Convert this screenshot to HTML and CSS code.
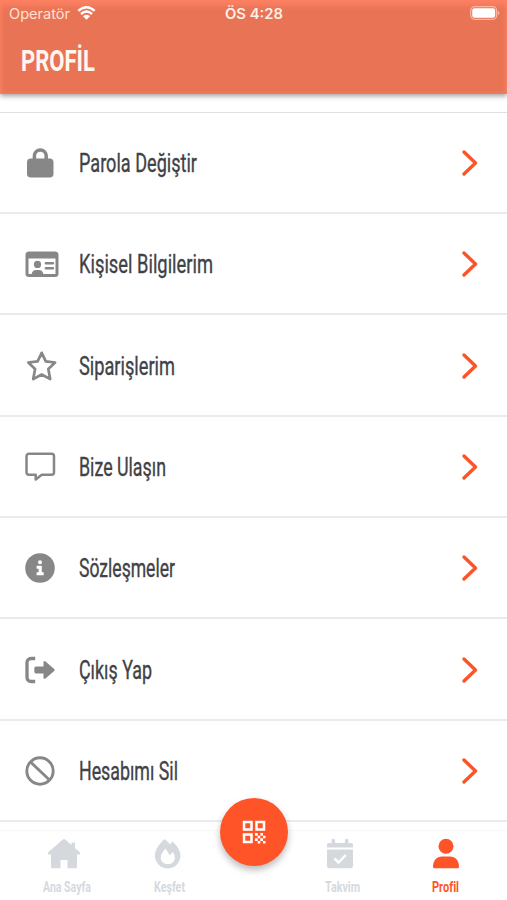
FILE: index.html
```html
<!DOCTYPE html>
<html lang="tr">
<head>
<meta charset="utf-8">
<meta name="viewport" content="width=device-width, initial-scale=1">
<title>Profil</title>
<link rel="stylesheet" href="styles.css">
</head>
<body>
<div class="screen">
  <header class="header">
    <div class="status">
      <div class="carrier">
        <svg class="label" width="62" height="20"><text x="0" y="15" textLength="61" lengthAdjust="spacingAndGlyphs">Operatör</text></svg>
        <svg class="wifi" width="19" height="14" viewBox="0 0 19 14"><path d="M1.3 4.8Q9.5-2.4 17.7 4.8M4 8Q9.5 3.2 15 8" fill="none" stroke="currentColor" stroke-width="2.4"/><path d="M6 10.2Q9.500 7.300 13 10.200L9.500 13.700z" fill="currentColor"/></svg>
      </div>
      <svg class="label clock" width="58" height="20"><text x="-1" y="15" textLength="58" lengthAdjust="spacingAndGlyphs">ÖS 4:28</text></svg>
      <svg class="battery" width="30" height="15" viewBox="0 0 30 15"><rect x=".7" y=".7" width="26" height="12.600" rx="4" fill="none" stroke="#ffb7a3" stroke-width="1.300"/><rect x="2.200" y="2.200" width="23" height="9.600" rx="2.300" fill="#fff"/><path d="M28 5q3 2 0 4z" fill="#ffb7a3"/></svg>
    </div>
    <svg class="title" width="76" height="40"><text x="0" y="31" textLength="74" lengthAdjust="spacingAndGlyphs">PROFİL</text></svg>
  </header>

  <main class="list">
    <a class="row">
      <svg class="icon" width="36" height="36" viewBox="0 0 36 36"><path d="M10.400 16V10.800a5.900 5.900 0 0 1 11.800 0V16" fill="none" stroke="currentColor" stroke-width="3.500"/><rect x="3" y="13.500" width="26.500" height="19" rx="3.800" fill="currentColor"/></svg>
      <svg class="text" width="118" height="36"><text x="0" y="27" textLength="118" lengthAdjust="spacingAndGlyphs">Parola Değiştir</text></svg>
      <svg class="chevron" width="18" height="28" viewBox="0 0 18 28"><path d="M3 3L14.500 14 3 25"/></svg>
    </a>
    <a class="row">
      <svg class="icon" width="36" height="36" viewBox="0 0 36 36"><path fill="currentColor" fill-rule="evenodd" d="M5 5.500h26a3.500 3.500 0 0 1 3.500 3.500v18.500a3.500 3.500 0 0 1-3.500 3.500H5a3.500 3.500 0 0 1-3.500-3.500V9A3.500 3.500 0 0 1 5 5.500zM4.500 12.500V28h3.200c.4-2.500 2-4 4.300-4h3c2.300 0 3.900 1.500 4.300 4h12.200V12.500z"/><circle cx="13.500" cy="18.400" r="3.600" fill="currentColor"/><path d="M21.800 17.300h7.200M21.800 22.300h7.200" stroke="currentColor" stroke-width="2.400" stroke-linecap="round"/></svg>
      <svg class="text" width="133" height="36"><text x="0" y="27" textLength="134" lengthAdjust="spacingAndGlyphs">Kişisel Bilgilerim</text></svg>
      <svg class="chevron" width="18" height="28" viewBox="0 0 18 28"><path d="M3 3L14.500 14 3 25"/></svg>
    </a>
    <a class="row">
      <svg class="icon" width="36" height="36" viewBox="0 0 36 36"><path d="M17.700 4.800L21.800 13.300 31.100 14.500 24.300 20.900 26.200 31.100 17.700 26.500 9.200 31.100 11.100 20.900 4.300 14.500 13.600 13.300z" fill="none" stroke="currentColor" stroke-width="2.700" stroke-linejoin="round"/></svg>
      <svg class="text" width="96" height="36"><text x="0" y="27" textLength="96" lengthAdjust="spacingAndGlyphs">Siparişlerim</text></svg>
      <svg class="chevron" width="18" height="28" viewBox="0 0 18 28"><path d="M3 3L14.500 14 3 25"/></svg>
    </a>
    <a class="row">
      <svg class="icon" width="36" height="36" viewBox="0 0 36 36"><path d="M5 4.700h22.500a2.500 2.500 0 0 1 2.500 2.500v16a2.500 2.500 0 0 1-2.500 2.500H17.800L11.700 30.500V25.700H5a2.500 2.500 0 0 1-2.500-2.500v-16A2.500 2.500 0 0 1 5 4.700z" fill="none" stroke="currentColor" stroke-width="2.500" stroke-linejoin="round"/></svg>
      <svg class="text" width="87" height="36"><text x="0" y="27" textLength="87" lengthAdjust="spacingAndGlyphs">Bize Ulaşın</text></svg>
      <svg class="chevron" width="18" height="28" viewBox="0 0 18 28"><path d="M3 3L14.500 14 3 25"/></svg>
    </a>
    <a class="row">
      <svg class="icon" width="36" height="36" viewBox="0 0 36 36"><circle cx="16" cy="18" r="14.800" fill="currentColor"/><circle cx="16" cy="12.300" r="2" fill="#fff"/><path d="M12.600 15.800h5.200v6.400h1.900v3h-7.100v-3h2v-3.400h-2z" fill="#fff"/></svg>
      <svg class="text" width="96" height="36"><text x="0" y="27" textLength="96" lengthAdjust="spacingAndGlyphs">Sözleşmeler</text></svg>
      <svg class="chevron" width="18" height="28" viewBox="0 0 18 28"><path d="M3 3L14.500 14 3 25"/></svg>
    </a>
    <a class="row">
      <svg class="icon" width="36" height="36" viewBox="0 0 36 36"><path d="M11.200 6.500H7a4 4 0 0 0-4 4v15a4 4 0 0 0 4 4h4.200" fill="none" stroke="currentColor" stroke-width="3.300"/><path d="M12 14.500h7.500V10.200q.3-1.800 2-.8l8.700 7.600q1 1 0 2l-8.700 7.600q-1.700 1-2-.8V21.500H12q-1.700 0-1.700-1.700v-3.600q0-1.700 1.700-1.700z" fill="currentColor"/></svg>
      <svg class="text" width="74" height="36"><text x="0" y="27" textLength="73" lengthAdjust="spacingAndGlyphs">Çıkış Yap</text></svg>
      <svg class="chevron" width="18" height="28" viewBox="0 0 18 28"><path d="M3 3L14.500 14 3 25"/></svg>
    </a>
    <a class="row">
      <svg class="icon" width="36" height="36" viewBox="0 0 36 36"><g fill="none" stroke="currentColor" stroke-width="2.900"><circle cx="16" cy="18" r="13.200"/><path d="M6.500 9L25.500 27"/></g></svg>
      <svg class="text" width="100" height="36"><text x="0" y="27" textLength="99" lengthAdjust="spacingAndGlyphs">Hesabımı Sil</text></svg>
      <svg class="chevron" width="18" height="28" viewBox="0 0 18 28"><path d="M3 3L14.500 14 3 25"/></svg>
    </a>
  </main>

  <nav class="tabs">
    <a class="tab home">
      <svg width="36" height="32" viewBox="0 0 36 32"><path d="M16.800 1.500q1.200-1 2.400 0L25.500 7V4.500h3.500V10L34 14.500q1 1.500-.5 2H31v12.800q0 1-1 1H21.500V22h-7v8.300H6q-1 0-1-1V16.500H2.500q-1.500-.5-.5-2z" fill="currentColor"/></svg>
      <svg class="caption" width="49" height="20"><text x="3" y="15.500" textLength="48" lengthAdjust="spacingAndGlyphs">Ana Sayfa</text></svg>
    </a>
    <a class="tab explore">
      <svg width="32" height="32" viewBox="0 0 32 32"><path fill="currentColor" fill-rule="evenodd" d="M12.500 1c2 1.500 4 3.500 5.500 5.600L20.500 3.500C25 7.500 28.500 13 28.500 17.600a12.800 12.800 0 0 1-25.600 0C2.900 12 7.500 5.500 12.500 1zM13.600 10.500C11 13.500 8.800 16.500 8.800 19.500c0 4 3 6.600 7 6.600s7-2.600 7-6.400c0-2.300-.9-4.300-2-5.700l-3 3.400z"/></svg>
      <svg class="caption" width="32" height="20"><text x="2" y="15.500" textLength="31" lengthAdjust="spacingAndGlyphs">Keşfet</text></svg>
    </a>
    <a class="tab calendar">
      <svg width="32" height="32" viewBox="0 0 32 32"><path fill="currentColor" d="M3 9.500V6.500q0-1.500 1.500-1.500H7.500V2.500q0-1.800 1.800-1.800T11.100 2.500V5h9.800V2.500q0-1.800 1.800-1.800T24.500 2.500V5h3Q29 5 29 6.500v3zM3 11.500h26V28q0 2.300-2.300 2.300H5.300Q3 30.300 3 28z"/><path d="M10.500 20.500l4 4 7.300-7.500" fill="none" stroke="#fff" stroke-width="2.500"/></svg>
      <svg class="caption" width="35" height="20"><text x="2" y="15.500" textLength="35" lengthAdjust="spacingAndGlyphs">Takvim</text></svg>
    </a>
    <a class="tab profile">
      <svg width="32" height="32" viewBox="0 0 32 32"><circle cx="16" cy="8.300" r="7.500" fill="currentColor"/><path d="M3 28.800C3 22.500 6.800 18.500 12 18.500h8c5.200 0 9 4 9 10.300q0 1.500-1.500 1.500h-23Q3 30.300 3 28.800z" fill="currentColor"/></svg>
      <svg class="caption" width="27" height="20"><text x="0" y="15.500" textLength="27" lengthAdjust="spacingAndGlyphs">Profil</text></svg>
    </a>
    <a class="scan">
      <svg width="24" height="24" viewBox="0 0 24 24"><g fill="none" stroke="#fff" stroke-width="2.500"><path d="M2 2h7.500v7.500H2zM14.500 2H22v7.500h-7.500zM2 14.500h7.500V22H2z"/></g><path fill="#fff" d="M13 13h2.700v2.700H13zM18.300 13H21v2.700h-2.700zM15.700 15.700h2.600v2.600h-2.600zM21 15.700h2.500v2.600H21zM13 18.300h2.700V21H13zM18.300 18.300H21V21h-2.700zM15.700 21h2.600v2.500h-2.600zM21 21h2.500v2.500H21z"/></svg>
    </a>
  </nav>
</div>
</body>
</html>
```
FILE: styles.css
```css
* { box-sizing: border-box; }
body { margin: 0; background: #fff; font-family: Roboto, "Liberation Sans", sans-serif; }
svg { display: block; flex: none; overflow: visible; }
text { fill: currentColor; }

.screen { display: flex; flex-direction: column; width: 507px; height: 900px; overflow: hidden; }

.header {
  flex: none;
  height: 94px;
  background: #e97455;
  color: #fff7ef;
  box-shadow: inset 0 7px 7px -2px #ff8265, inset 2px 0 4px -1px #fb8063, inset -2px 0 4px -1px #fb8063, 0 2px 5px rgba(0, 0, 0, .38);
}
.status { display: grid; grid-template-columns: 1fr auto 1fr; height: 28px; padding: 4px 7px 0 9px; }
.carrier { display: flex; gap: 6px; color: #ffe2d5; }
.label { font-family: Inter, sans-serif; font-size: 14px; }
.wifi { margin-top: 2px; color: #fff; }
.clock { font-weight: 600; color: #fff0e6; }
.battery { justify-self: end; margin-top: 2px; }
.title { margin: 12px 0 0 21px; font-size: 30px; font-weight: 700; }

.list { flex: none; margin-top: 17.5px; border-top: 1.4px solid #dfdfdf; }
.row {
  display: flex;
  align-items: center;
  height: 101.4px;
  padding: 1.400px 28px 0 24px;
  border-bottom: 2px solid #ebebeb;
  color: #3f4247;
}
.icon { color: #878787; }
.text { margin-left: 19px; font-size: 25px; font-weight: 400; stroke: currentColor; stroke-width: .35px; }
.chevron { margin-left: auto; fill: none; stroke: #fa5429; stroke-width: 3.4; stroke-linecap: round; stroke-linejoin: round; }

.tabs {
  position: relative;
  flex: 1;
  display: grid;
  grid-template-columns: 118px 101px 71px 100px 111px;
  margin-top: 7.5px;
  border-top: 1px solid #f7f7f7;
  background: #fff;
}
.tab { display: flex; flex-direction: column; align-items: center; padding-top: 7px; color: #d5d9de; }
.caption { margin-top: 6px; font-size: 15px; font-weight: 700; }
.home { padding-left: 10px; }
.explore { padding-right: 1px; }
.calendar { grid-column: 4; }
.profile { grid-column: 5; color: #ff5427; }
.scan {
  position: absolute;
  left: 220px;
  top: -33px;
  display: flex;
  align-items: center;
  justify-content: center;
  width: 68px;
  height: 68px;
  border-radius: 50%;
  background: #ff5427;
  box-shadow: 0 4px 7px rgba(0, 0, 0, .27);
}
```
